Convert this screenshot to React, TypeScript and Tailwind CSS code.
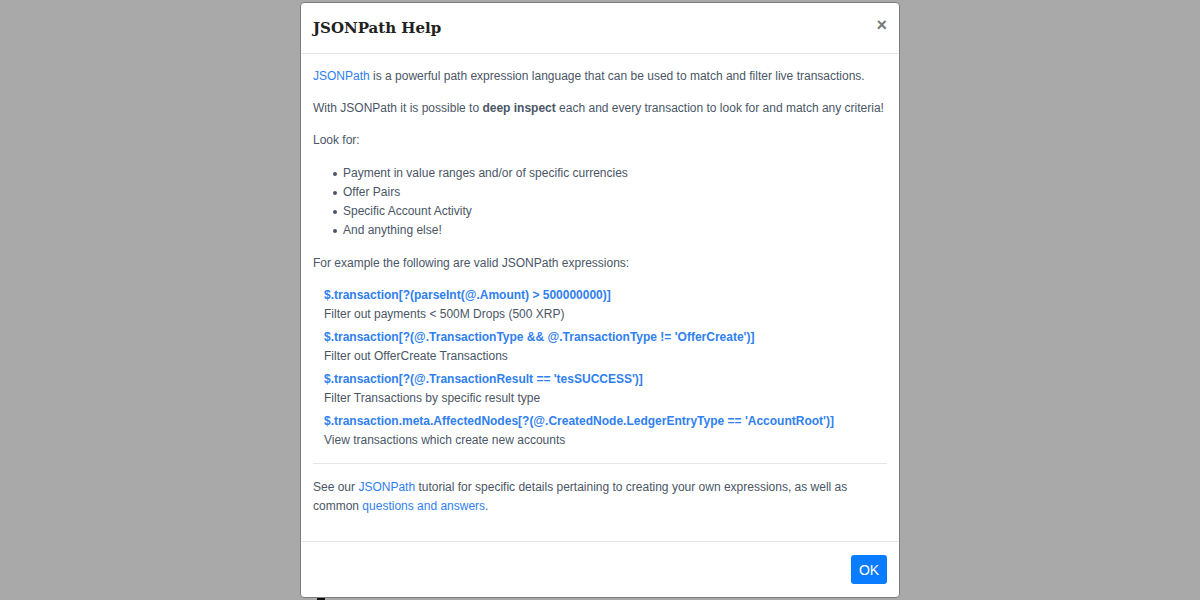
import React from "react";

const codeCls = "font-bold text-[#2f80f0]";

export default function App() {
  const examples = [
    ["$.transaction[?(parseInt(@.Amount) > 500000000)]", "Filter out payments < 500M Drops (500 XRP)"],
    ["$.transaction[?(@.TransactionType && @.TransactionType != 'OfferCreate')]", "Filter out OfferCreate Transactions"],
    ["$.transaction[?(@.TransactionResult == 'tesSUCCESS')]", "Filter Transactions by specific result type"],
    ["$.transaction.meta.AffectedNodes[?(@.CreatedNode.LedgerEntryType == 'AccountRoot')]", "View transactions which create new accounts"],
  ];
  const items = [
    "Payment in value ranges and/or of specific currencies",
    "Offer Pairs",
    "Specific Account Activity",
    "And anything else!",
  ];
  return (
    <div className="relative w-[1200px] h-[600px] overflow-hidden bg-[#a9a9a9] font-['Liberation_Sans',Arial,sans-serif]">
      <div className="absolute left-[317px] top-[597px] w-[8px] h-[4px] bg-[#111]" />
      <div className="relative mx-auto mt-[2px] w-[600px] bg-white border border-[#7d7d7d] rounded-[4px] flex flex-col">
        <div className="flex items-center justify-between h-[51px] px-[12px] border-b border-[#e5e5e5]">
          <h5 className="font-['DejaVu_Serif',serif] font-bold text-[15px] text-[#222] pt-[1px]">JSONPath Help</h5>
          <button className="text-[#7a7a7a] text-[18px] font-bold leading-none mr-[0px] pb-[6px]">×</button>
        </div>
        <div className="px-[12px] pt-[13px] pb-[13px] text-[12px] leading-[19px] text-[#4a5666]">
          <p className="mb-[13px]">
            <a className="text-[#2f80f0]">JSONPath</a> is a powerful path expression language that can be used to match and filter live transactions.
          </p>
          <p className="mb-[13px]">
            With JSONPath it is possible to <b>deep inspect</b> each and every transaction to look for and match any criteria!
          </p>
          <p className="mb-[14px]">Look for:</p>
          <ul className="pl-[20px] mb-[14px]">
            {items.map((t) => (
              <li key={t} className="flex items-center">
                <span className="w-[4px] h-[4px] rounded-full bg-[#4a5666] mr-[6px]" />
                {t}
              </li>
            ))}
          </ul>
          <p className="mb-[13px]">For example the following are valid JSONPath expressions:</p>
          <div className="pl-[11px] flex flex-col gap-[4px]">
            {examples.map(([c, d]) => (
              <div key={c}>
                <div className={codeCls}>{c}</div>
                <div>{d}</div>
              </div>
            ))}
          </div>
          <hr className="mt-[13px] mb-[14px] border-t border-[#e6e6e6]" />
          <p className="mb-[12px]">
            See our <a className="text-[#2f80f0]">JSONPath</a> tutorial for specific details pertaining to creating your own expressions, as well as common <a className="text-[#2f80f0]">questions and answers</a>.
          </p>
        </div>
        <div className="border-t border-[#e5e5e5] px-[12px] pt-[13px] pb-[13px] flex justify-end">
          <button className="bg-[#0a7cff] text-white text-[14px] leading-none h-[29px] w-[36px] rounded-[3px]">OK</button>
        </div>
      </div>
    </div>
  );
}
